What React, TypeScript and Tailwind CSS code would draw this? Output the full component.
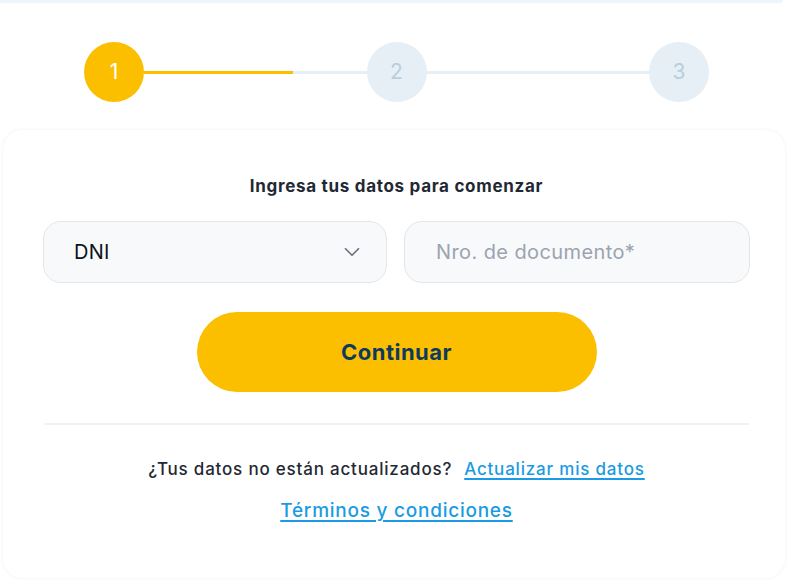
import { ChevronDown } from "lucide-react";

export default function App() {
  return (
    <div className="min-h-[580px] bg-white font-['Inter',sans-serif] overflow-hidden">
      <div aria-hidden className="h-[3px] w-[783px] bg-[#eef5fb] rounded-br-full" />

      <div className="h-[127px] pl-[84px] pr-[78px] pt-[39px]">
        <div className="flex items-center w-full">
          <Step n={1} active />
          <div className="flex-1 h-[3px] bg-[linear-gradient(to_right,#fcbf00_0%,#fcbf00_66.6%,#e6eff6_66.6%,#e6eff6_100%)]" />
          <Step n={2} />
          <div className="flex-1 h-[3px] bg-[#e6eff6]" />
          <Step n={3} />
        </div>
      </div>

      <div className="mx-[3px] w-[782px] h-[448px] rounded-[20px] bg-white shadow-[0_0_4px_rgba(15,23,42,0.06)] pt-[45px] pl-[40px]">
        <h1 className="w-[707px] text-center text-[17px] leading-[22px] tracking-[0.7px] font-bold text-[#1f2933]">
          Ingresa tus datos para comenzar
        </h1>

        <div className="mt-[24px] flex gap-[17px]">
          <button className="w-[344px] h-[62px] rounded-[18px] bg-[#f8f9fb] border border-[#e3e5e9] flex items-center justify-between pl-[30px] pr-[21px]">
            <span className="text-[20px] tracking-[0.3px] text-[#0b1220]">DNI</span>
            <ChevronDown size={26} strokeWidth={1.6} className="text-[#6b7280]" />
          </button>
          <div className="w-[346px] h-[62px] rounded-[18px] bg-[#f8f9fb] border border-[#e3e5e9] flex items-center pl-[31px]">
            <span className="text-[20px] tracking-[0.4px] text-[#9ca3af]">Nro. de documento*</span>
          </div>
        </div>

        <div className="w-[707px] flex justify-center mt-[29px]">
          <button className="w-[400px] h-[80px] rounded-full bg-[#fcbf00] text-[22px] tracking-[0.5px] font-bold text-[#0e3a5f]">
            Continuar
          </button>
        </div>

        <div className="w-[705px] ml-[1px] h-[2px] bg-[#f2f2f3] mt-[31px]" />

        <div className="w-[707px] mt-[33px] flex justify-center items-center gap-[12px] text-[17px] leading-[22px] tracking-[0.8px]">
          <span className="font-medium text-[#1f2933]">¿Tus datos no están actualizados?</span>
          <a href="#" className="font-medium text-[#1b9be3] underline underline-offset-[3px] decoration-2">Actualizar mis datos</a>
        </div>
        <div className="w-[707px] mt-[19px] flex justify-center text-[19px] leading-[24px] tracking-[0.75px]">
          <a href="#" className="font-medium text-[#1b9be3] underline underline-offset-[3px] decoration-2">Términos y condiciones</a>
        </div>
      </div>
    </div>
  );
}

function Step({ n, active }: { n: number; active?: boolean }) {
  return (
    <div
      className={
        active
          ? "w-[60px] h-[60px] rounded-full bg-[#fcbf00] text-white flex items-center justify-center text-[21px] shrink-0"
          : "w-[60px] h-[60px] rounded-full bg-[#e6eff6] text-[#b8cedd] flex items-center justify-center text-[21px] shrink-0"
      }
    >
      {n}
    </div>
  );
}
